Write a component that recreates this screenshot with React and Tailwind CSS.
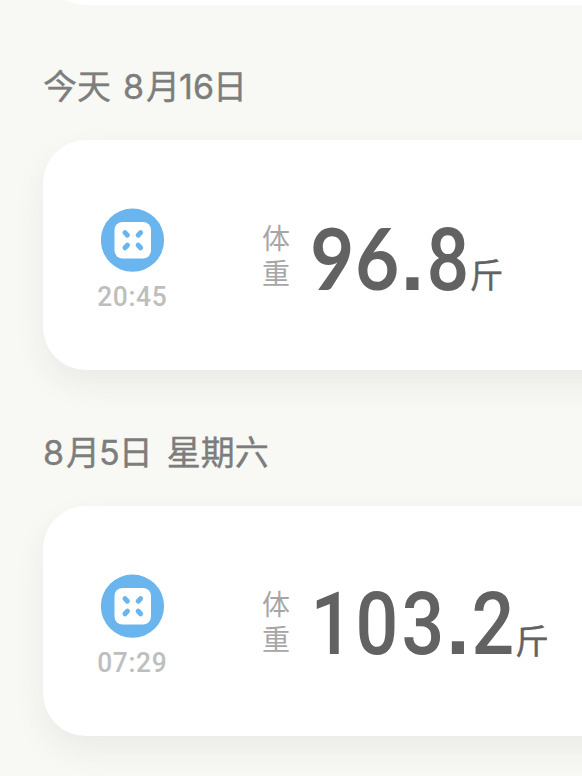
import React from 'react';
import clsx from 'clsx';

const records = [
  { day: '今天', date: ['8', '月', '16', '日'], time: '20:45', weight: '96.8' },
  { day: '星期六', date: ['8', '月', '5', '日'], dateFirst: true, time: '07:29', weight: '103.2' },
];

const ScaleIcon = () => (
  <svg viewBox="0 0 64 64" className="block h-16 w-16" fill="none">
    <circle cx="31.5" cy="32.2" r="31.6" fill="#6bb5ee" />
    <rect x="13.5" y="14" width="36.5" height="36.5" rx="8" fill="#fff" />
    <g stroke="#6bb5ee" strokeWidth="5" strokeLinecap="round">
      <path d="M24 24.6l2.4 2.6M39.6 24.6l-2.4 2.6M24 39.8l2.4-2.6M39.6 39.8l-2.4-2.6" />
    </g>
  </svg>
);

// 6 and 9 have straight tails in Lato, the other digits are narrower in Roboto
const Digit = ({ char }) => {
  if (char === '.') {
    return <span className="flex w-[25px] shrink-0 justify-center font-['Liberation_Sans',sans-serif] font-bold">.</span>;
  }
  const straight = char === '6' || char === '9';
  return (
    <span className="flex w-[45.5px] shrink-0 justify-center">
      <span
        className={clsx(
          'block',
          straight
            ? "scale-x-[.87] font-['Lato',sans-serif] text-[87px] leading-[60px] font-bold"
            : "scale-x-[.86] font-['Roboto',sans-serif] text-[87.5px] font-medium"
        )}
      >
        {char}
      </span>
    </span>
  );
};

const Weight = ({ value }) => (
  <div className="-mt-px flex h-[62px] items-baseline text-[86px] leading-[62px] text-[#626262]">
    {value.split('').map((char, i) => (
      <Digit key={i} char={char} />
    ))}
  </div>
);

const RecordCard = ({ time, weight }) => (
  <div className="flex h-[230px] w-[620px] rounded-[43px] bg-white shadow-[0_14px_32px_rgba(50,50,50,0.065)]">
    <div className="ml-[46px] flex w-[88px] shrink-0 flex-col items-center pt-[68px]">
      <ScaleIcon />
      <div className="mt-[11px] mr-[2px] origin-center scale-x-[.94] font-['Roboto',sans-serif] text-[28px] leading-7 font-medium tracking-[0.7px] text-[#bebebe]">
        {time}
      </div>
    </div>
    <div className="ml-[85px] w-7 shrink-0 pt-[80px] font-['Noto_Sans_CJK_SC',sans-serif] text-[28px] leading-[35px] font-normal text-[#a6a6a6]">
      体重
    </div>
    <div className="ml-[19px] flex pt-[88px]">
      <Weight value={weight} />
      <div className="mt-[28px] -ml-px h-[35px] font-['Noto_Sans_CJK_SC',sans-serif] text-[34px] leading-[35px] text-[#626262] [-webkit-text-stroke:0.3px_#626262]">
        斤
      </div>
    </div>
  </div>
);

const DayHeading = ({ day, date, dateFirst }) => (
  <h2
    className={clsx(
      "flex h-[50px] items-center font-['Inter','Noto_Sans_CJK_SC',sans-serif] text-[34px] leading-[50px] font-normal whitespace-nowrap text-[#7d7d7d] [-webkit-text-stroke:0.4px_#7d7d7d]",
      dateFirst ? 'flex-row-reverse justify-end gap-[14px]' : 'gap-[12px]'
    )}
  >
    <span>{day}</span>
    <span className="flex">
      {date.map((part, i) => (
        <span key={i} className={clsx(part === '月' && 'ml-[2px] -mr-px', part === '日' && '-ml-px')}>
          {part}
        </span>
      ))}
    </span>
  </h2>
);

const App = () => {
  return (
    <div className="h-[776px] w-full overflow-hidden bg-[#f8f9f4] pl-[43px]">
      <div className="-mt-[225px] h-[230px] w-[620px] rounded-[43px] bg-white" />
      <div className="flex flex-col gap-[57.6px] pt-[57px]">
        {records.map((record) => (
          <section key={record.time}>
            <DayHeading {...record} />
            <div className="mt-[28px]">
              <RecordCard {...record} />
            </div>
          </section>
        ))}
      </div>
    </div>
  );
};

export default App;
